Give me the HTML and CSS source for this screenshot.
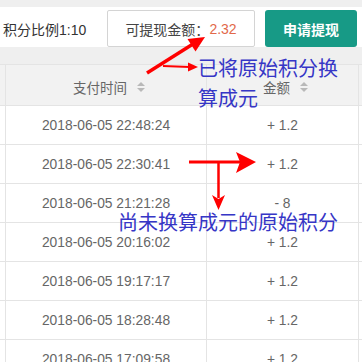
FILE: index.html
```html
<!DOCTYPE html>
<html lang="zh">
<head>
<meta charset="utf-8">
<link rel="stylesheet" href="styles.css">
</head>
<body>
<div class="page">
  <div class="topbar">
    <span class="ratio">积分比例1:10</span>
    <div class="balance">可提现金额：<span class="amount">2.32</span></div>
    <button class="apply">申请提现</button>
  </div>
  <div class="table-wrap">
    <table class="records">
      <colgroup>
        <col class="c-sel"><col class="c-time"><col class="c-amt"><col class="c-more">
      </colgroup>
      <thead>
        <tr>
          <th></th>
          <th><span class="th-in">支付时间<i class="sort"></i></span></th>
          <th><span class="th-in">金额<i class="sort"></i></span></th>
          <th></th>
        </tr>
      </thead>
      <tbody>
        <tr><td></td><td>2018-06-05 22:48:24</td><td>+ 1.2</td><td></td></tr>
        <tr><td></td><td>2018-06-05 22:30:41</td><td>+ 1.2</td><td></td></tr>
        <tr><td></td><td>2018-06-05 21:21:28</td><td>- 8</td><td></td></tr>
        <tr><td></td><td>2018-06-05 20:16:02</td><td>+ 1.2</td><td></td></tr>
        <tr><td></td><td>2018-06-05 19:17:17</td><td>+ 1.2</td><td></td></tr>
        <tr><td></td><td>2018-06-05 18:28:48</td><td>+ 1.2</td><td></td></tr>
        <tr><td></td><td>2018-06-05 17:09:58</td><td>+ 1.2</td><td></td></tr>
      </tbody>
    </table>
  </div>

  <div class="note note-top">已将原始积分换<br>算成元</div>
  <div class="note note-mid">尚未换算成元的原始积分</div>
  <svg class="arrows" width="362" height="362" viewBox="0 0 362 362">
    <line x1="147" y1="73" x2="193" y2="44" stroke="#f00" stroke-width="3.5"/>
    <polygon points="205,37 195.5,51.5 187.5,39" fill="#f00"/>
    <line x1="163" y1="66" x2="190" y2="67" stroke="#f00" stroke-width="2"/>
    <polygon points="198,67 188,62.5 188,71.5" fill="#f00"/>
    <line x1="189" y1="162" x2="240" y2="162" stroke="#f00" stroke-width="3"/>
    <polygon points="256,162 236,152 240,162 236,173" fill="#f00"/>
    <line x1="218.5" y1="162" x2="218.5" y2="198" stroke="#f00" stroke-width="2.5"/>
    <polygon points="218.5,210 212,195 218.5,199 225,195" fill="#f00"/>
  </svg>
</div>
</body>
</html>
```

FILE: styles.css
```css
* { box-sizing: border-box; }
html, body {
  margin: 0;
  padding: 0;
  background: #efefef;
  font-family: "Liberation Sans", "Noto Sans CJK SC", sans-serif;
}
.page {
  position: relative;
  width: 362px;
  height: 362px;
  overflow: hidden;
  padding-top: 7px;
}
.topbar {
  background: #fff;
  height: 40px;
  padding: 3px 0 0 3px;
  display: flex;
  align-items: center;
}
.ratio {
  font-size: 14px;
  color: #333;
  width: 104px;
}
.balance {
  width: 148px;
  height: 37px;
  border: 1px solid #d4d4d4;
  border-radius: 2px;
  display: flex;
  align-items: center;
  justify-content: center;
  font-size: 14px;
  color: #444;
  background: #fff;
}
.amount { color: #e2694a; }
.apply {
  margin-left: 10px;
  width: 92px;
  height: 37px;
  border: none;
  border-radius: 3px;
  background: #179a86;
  color: #fff;
  font-family: "Liberation Sans", "Noto Sans CJK SC", sans-serif;
  font-size: 14px;
  font-weight: bold;
  padding: 0;
}
.table-wrap {
  margin-top: 17px;
  width: 362px;
  overflow: hidden;
}
.records {
  border-collapse: collapse;
  table-layout: fixed;
  width: 420px;
  margin-left: -1px;
}
.c-sel { width: 6px; }
.c-time { width: 201px; }
.c-amt { width: 152px; }
.c-more { width: 61px; }
.records th, .records td {
  border: 1px solid #e4e4e4;
  text-align: center;
  padding: 0;
  color: #666;
}
.records thead tr { height: 41px; }
.records th {
  background: #f2f2f2;
  font-weight: normal;
  font-size: 13.5px;
  padding: 3px 0 0 6px;
}
.th-in {
  display: inline-flex;
  align-items: center;
  gap: 10px;
}
.sort {
  display: inline-flex;
  flex-direction: column;
  gap: 2px;
}
.sort::before, .sort::after {
  content: "";
  display: block;
  width: 0;
  height: 0;
  border-left: 4.5px solid transparent;
  border-right: 4.5px solid transparent;
}
.sort::before { border-bottom: 4.5px solid #b9b9b9; }
.sort::after { border-top: 4.5px solid #b9b9b9; }
.records tbody tr { height: 39px; }
.records td {
  background: #fff;
  font-size: 13.8px;
  padding-top: 1px;
}
.note {
  position: absolute;
  font-family: "Noto Sans CJK SC", sans-serif;
  font-size: 20px;
  line-height: 30px;
  color: #3636c6;
  white-space: nowrap;
}
.note-top { left: 198px; top: 53px; }
.note-mid { left: 118px; top: 207px; }
.arrows {
  position: absolute;
  left: 0;
  top: 0;
  pointer-events: none;
}
```
